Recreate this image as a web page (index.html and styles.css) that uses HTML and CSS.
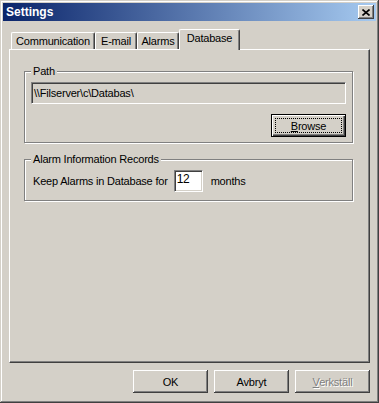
FILE: index.html
```html
<!DOCTYPE html>
<html lang="en">
<head>
  <meta charset="UTF-8" />
  <title>Settings</title>
  <link rel="stylesheet" href="styles.css">
</head>
<body>
  <div class="window">
    <div class="titlebar">
      <span>Settings</span>
      <span class="close">
        <svg width="8" height="7" viewBox="0 0 8 7">
          <path d="M0.5 0.5 L7.5 6.5 M7.5 0.5 L0.5 6.5" stroke="#000" stroke-width="1.6" fill="none"/>
        </svg>
      </span>
    </div>

    <div class="tabs">
      <div class="tab tab-comm">Communication</div>
      <div class="tab tab-mail">E-mail</div>
      <div class="tab tab-alarms">Alarms</div>
      <div class="tab tab-db active">Database</div>
    </div>

    <div class="panel">
      <fieldset class="group group-path">
        <legend>Path</legend>
        <div class="field">\\Filserver\c\Databas\</div>
        <button class="button default"><span class="focus"><u>B</u>rowse</span></button>
      </fieldset>

      <fieldset class="group group-alarm">
        <legend>Alarm Information Records</legend>
        <div class="row">
          <span>Keep Alarms in Database for</span>
          <div class="input">12</div>
          <span>months</span>
        </div>
      </fieldset>
    </div>

    <div class="footer">
      <button class="button">OK</button>
      <button class="button">Avbryt</button>
      <button class="button disabled"><span><u>V</u>erkställ</span></button>
    </div>
  </div>
</body>
</html>
```

FILE: styles.css
```css
body {
  margin: 0;
  font-family: "Liberation Sans", Arial, sans-serif;
  font-size: 11px;
  letter-spacing: -0.2px;
  color: #000;
}

.window {
  width: 379px;
  height: 403px;
  box-sizing: border-box;
  padding: 3px;
  background: #d4d0c8;
  box-shadow: inset -1px -1px #404040, inset 1px 1px #d4d0c8, inset -2px -2px #808080, inset 2px 2px #fff;
  display: flex;
  flex-direction: column;
}

.titlebar {
  height: 18px;
  flex: none;
  display: flex;
  align-items: center;
  justify-content: space-between;
  padding: 0 2px 0 3px;
  background: linear-gradient(to right, #0a246a, #a6caf0);
  color: #fff;
  font-weight: bold;
  font-size: 12px;
  letter-spacing: 0;
}

.close {
  width: 16px;
  height: 14px;
  box-sizing: border-box;
  background: #d4d0c8;
  box-shadow: inset -1px -1px #404040, inset 1px 1px #fff, inset -2px -2px #808080;
  display: flex;
  align-items: center;
  justify-content: center;
}

.tabs {
  display: flex;
  align-items: flex-end;
  height: 20px;
  flex: none;
  margin: 8px 6px 0;
  padding-left: 2px;
}

.tab {
  height: 17px;
  box-sizing: border-box;
  border: 1px solid #fff;
  border-bottom: 0;
  border-right-color: #404040;
  border-radius: 2px 2px 0 0;
  box-shadow: inset -1px 0 #808080;
  display: flex;
  justify-content: center;
  padding-top: 2px;
  line-height: 13px;
}

.tab-comm { width: 84px; }
.tab-mail { width: 42px; }
.tab-alarms { width: 42px; }
.tab-db { width: 61px; }

.tab.active {
  height: 21px;
  margin-bottom: -1px;
  position: relative;
  z-index: 1;
  background: #d4d0c8;
  padding-top: 2px;
}

.panel {
  flex: none;
  height: 314px;
  margin: 0 6px;
  box-sizing: border-box;
  border: 1px solid #fff;
  border-right-color: #404040;
  border-bottom-color: #404040;
  box-shadow: inset -1px -1px #808080;
  padding: 15px 0 0 14px;
}

.group {
  width: 329px;
  box-sizing: border-box;
  margin: 0;
  min-width: 0;
  padding: 4px 6px 5px;
  border: 1px solid #808080;
  box-shadow: 1px 1px 0 #fff, inset 1px 1px 0 #fff;
  display: flex;
  flex-direction: column;
}

.group legend {
  padding: 0 2px;
  line-height: 13px;
  background: #d4d0c8;
}

.group-alarm {
  margin-top: 10px;
  padding-bottom: 8px;
}

.field {
  height: 22px;
  box-sizing: border-box;
  border: 1px solid;
  border-color: #808080 #fff #fff #808080;
  box-shadow: inset 1px 1px #404040, inset -1px -1px #d4d0c8;
  padding: 0 2px;
  line-height: 20px;
}

.button {
  width: 75px;
  height: 23px;
  box-sizing: border-box;
  border: 0;
  padding: 0;
  margin: 0;
  font: inherit;
  letter-spacing: inherit;
  color: #000;
  background: #d4d0c8;
  box-shadow: inset -1px -1px #404040, inset 1px 1px #fff, inset -2px -2px #808080;
  display: flex;
  align-items: center;
  justify-content: center;
}

.button.default {
  align-self: flex-end;
  margin-top: 10px;
  border: 1px solid #000;
  box-shadow: inset 1px 1px #fff, inset -1px -1px #404040, inset -2px -2px #808080;
  align-items: stretch;
  justify-content: stretch;
  padding: 3px;
}

.focus {
  flex: 1;
  border: 1px dotted #000;
  display: flex;
  align-items: center;
  justify-content: center;
}

.button.disabled {
  color: #808080;
  text-shadow: 1px 1px 0 #fff;
}

.row {
  display: flex;
  align-items: center;
  padding-left: 2px;
}

.input {
  width: 29px;
  height: 22px;
  box-sizing: border-box;
  margin: 0 8px 0 6px;
  background: #fff;
  border: 1px solid;
  border-color: #808080 #fff #fff #808080;
  box-shadow: inset 1px 1px #404040, inset -1px -1px #d4d0c8;
  padding: 1px 0 0 2px;
  font-size: 12px;
  line-height: 14px;
}

.footer {
  flex: none;
  display: flex;
  justify-content: flex-end;
  gap: 6px;
  margin-top: 7px;
  padding-right: 6px;
}
```
